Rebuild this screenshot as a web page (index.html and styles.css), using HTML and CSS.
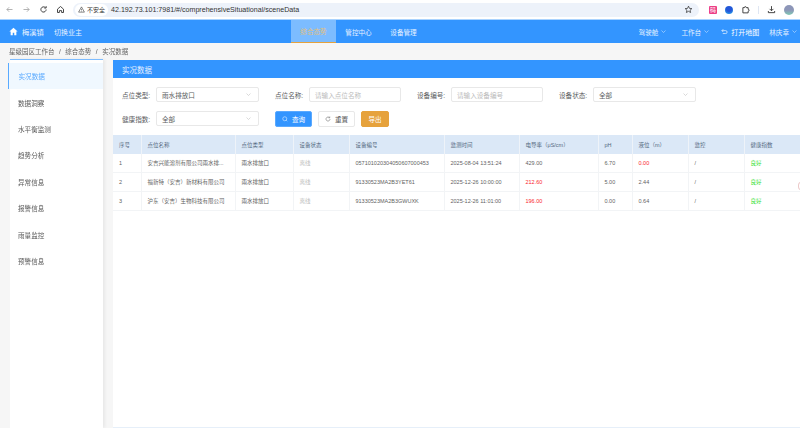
FILE: index.html
```html
<!DOCTYPE html>
<html lang="zh-CN">
<head>
    <meta charset="UTF-8">
    <title>实况数据</title>
    <link rel="stylesheet" href="styles.css">
</head>
<body>
    <div class="toolbar">
        <div class="tool-btns">
            <svg class="tool-icon faded" viewBox="0 0 12 12"><path d="M10 6H2.500M5.500 3L2.500 6l3 3"/></svg>
            <svg class="tool-icon faded" viewBox="0 0 12 12"><path d="M2 6h7.500M6.500 3l3 3-3 3"/></svg>
            <svg class="tool-icon" viewBox="0 0 12 12"><path d="M9.500 6A3.500 3.500 0 1 1 8.500 3.500M9.500 1.500v2.500H7"/></svg>
            <svg class="tool-icon" viewBox="0 0 12 12"><path d="M2 5.500L6 2l4 3.500v4.500H7.500V7.500h-3V10H2z"/></svg>
        </div>
        <div class="address">
            <span class="secure">
                <svg class="warn" viewBox="0 0 12 12"><path d="M6 1.500L11 10.500H1z"/><path d="M6 5v2.500M6 8.500v.8"/></svg>
                不安全
            </span>
            <span class="url">42.192.73.101:7981/#/comprehensiveSituational/sceneData</span>
            <svg class="star" viewBox="0 0 12 12"><path d="M6 1.500l1.300 3 3.200.3-2.400 2.100.7 3.100L6 8.400 3.200 10l.7-3.100L1.500 4.800l3.200-.3z"/></svg>
        </div>
        <div class="ext-btns">
            <span class="ext-pink">码</span>
            <span class="ext-blue"></span>
            <svg class="tool-icon" viewBox="0 0 12 12"><path d="M2.500 3.500h2a1.300 1.300 0 0 1 2.600 0h2.400v2.200a1.300 1.300 0 0 1 0 2.600v2.200h-7z"/></svg>
            <span class="tool-sep"></span>
            <svg class="tool-icon" viewBox="0 0 12 12"><path d="M6 1.500v6M3.500 5.200L6 7.700l2.500-2.500M1.800 8v2.200h8.400V8"/></svg>
            <span class="avatar"></span>
        </div>
    </div>

    <header class="topbar">
        <div class="brand">
            <svg class="home" viewBox="0 0 12 12"><path d="M6 1L.5 6h1.700v5h2.800V7.500h2V11h2.800V6h1.700z"/></svg>
            <span class="town">梅溪镇</span>
            <span class="switch">切换业主</span>
        </div>
        <nav class="nav">
            <a class="nav-item active">综合态势</a>
            <a class="nav-item">管控中心</a>
            <a class="nav-item">设备管理</a>
        </nav>
        <div class="top-right">
            <span class="menu menu-a">驾驶舱 <svg class="chev" viewBox="0 0 10 6"><path d="M1 1l4 4 4-4"/></svg></span>
            <span class="menu menu-b">工作台 <svg class="chev" viewBox="0 0 10 6"><path d="M1 1l4 4 4-4"/></svg></span>
            <span class="map-link">
                <svg class="back" viewBox="0 0 12 12"><path d="M4 2L1.500 4.500 4 7M1.500 4.500H8a2.500 2.500 0 0 1 0 5H3"/></svg>
                打开地图
            </span>
            <span class="menu">林庆幸 <svg class="chev" viewBox="0 0 10 6"><path d="M1 1l4 4 4-4"/></svg></span>
        </div>
    </header>

    <div class="crumbs">
        <span>星级园区工作台</span><i>/</i><span>综合态势</span><i>/</i><span>实况数据</span>
    </div>

    <div class="layout">
        <aside class="sidebar">
            <a class="side-item active">实况数据</a>
            <a class="side-item">数据洞察</a>
            <a class="side-item">水平衡监测</a>
            <a class="side-item">趋势分析</a>
            <a class="side-item">异常信息</a>
            <a class="side-item">报警信息</a>
            <a class="side-item">雨量监控</a>
            <a class="side-item">预警信息</a>
        </aside>

        <main class="panel">
            <div class="panel-title">实况数据</div>

            <div class="filters">
                <div class="field">
                    <label>点位类型:</label>
                    <div class="select">雨水排放口<svg class="chev" viewBox="0 0 10 6"><path d="M1 1l4 4 4-4"/></svg></div>
                </div>
                <div class="field">
                    <label>点位名称:</label>
                    <div class="input">请输入点位名称</div>
                </div>
                <div class="field">
                    <label>设备编号:</label>
                    <div class="input">请输入设备编号</div>
                </div>
                <div class="field">
                    <label>设备状态:</label>
                    <div class="select">全部<svg class="chev" viewBox="0 0 10 6"><path d="M1 1l4 4 4-4"/></svg></div>
                </div>
                <div class="field">
                    <label>健康指数:</label>
                    <div class="select">全部<svg class="chev" viewBox="0 0 10 6"><path d="M1 1l4 4 4-4"/></svg></div>
                </div>
                <div class="actions">
                    <button class="btn primary"><svg class="btn-icon" viewBox="0 0 12 12"><circle cx="5.500" cy="5.500" r="4"/><path d="M8.500 8.500l2 2"/></svg>查询</button>
                    <button class="btn"><svg class="btn-icon" viewBox="0 0 12 12"><path d="M10 6a4 4 0 1 1-1.200-2.800M9.500 1v2.500H7"/></svg>重置</button>
                    <button class="btn warning">导出</button>
                </div>
            </div>

            <table class="grid">
                <thead>
                    <tr>
                        <th>序号</th><th>点位名称</th><th>点位类型</th><th>设备状态</th><th>设备编号</th><th>监测时间</th><th>电导率（μS/cm）</th><th>pH</th><th>液位（m）</th><th>监控</th><th>健康指数</th>
                    </tr>
                </thead>
                <tbody>
                    <tr>
                        <td>1</td><td>安吉兴能溶剂有限公司雨水排...</td><td>雨水排放口</td><td class="off">离线</td><td>057101020304050607000453</td><td>2025-08-04 13:51:24</td><td>429.00</td><td>6.70</td><td class="bad">0.00</td><td>/</td><td class="good">良好</td>
                    </tr>
                    <tr>
                        <td>2</td><td>福新特（安吉）新材料有限公司</td><td>雨水排放口</td><td class="off">离线</td><td>91330523MA2B3YET61</td><td>2025-12-26 10:00:00</td><td class="bad">212.60</td><td>5.00</td><td>2.44</td><td>/</td><td class="good">良好</td>
                    </tr>
                    <tr>
                        <td>3</td><td>沪东（安吉）生物科技有限公司</td><td>雨水排放口</td><td class="off">离线</td><td>91330523MA2B3GWUXK</td><td>2025-12-26 11:01:00</td><td class="bad">196.00</td><td>0.00</td><td>0.64</td><td>/</td><td class="good">良好</td>
                    </tr>
                </tbody>
            </table>
            <span class="edge-nub"></span>
        </main>
    </div>
</body>
</html>
```

FILE: styles.css
```css
* {
    box-sizing: border-box;
}
html, body {
    margin: 0;
    height: 100%;
    overflow: hidden;
}
body {
    display: flex;
    flex-direction: column;
    font-family: "Liberation Sans", "Noto Sans CJK SC", sans-serif;
    font-size: 6.6px;
    color: #5a5c60;
    background-color: #f6f6f6;
    filter: blur(0.25px);
}
svg {
    fill: none;
    stroke: currentColor;
}

/* browser bar */
.toolbar {
    height: 20px;
    flex: none;
    display: flex;
    align-items: center;
    background-color: #fff;
    border-bottom: 1px solid #a9d3ff;
}
.tool-btns {
    width: 73px;
    display: flex;
    gap: 8px;
    padding-left: 5px;
    flex: none;
}
.tool-icon {
    width: 9px;
    height: 9px;
    color: #333;
    stroke-width: 1.2;
    flex: none;
}
.tool-icon.faded {
    color: #aaa;
}
.address {
    width: 626px;
    height: 14px;
    flex: none;
    display: flex;
    align-items: center;
    background-color: #edf2fa;
    border-radius: 7px;
    padding: 0 6px 0 2px;
}
.secure {
    display: flex;
    align-items: center;
    gap: 2px;
    height: 12px;
    padding: 0 3px;
    background-color: #fff;
    border-radius: 6px;
    font-size: 6px;
    color: #333;
}
.warn {
    width: 7px;
    height: 7px;
    color: #333;
}
.url {
    margin-left: 3px;
    font-size: 7.1px;
    color: #333;
    flex: 1;
}
.star {
    width: 9px;
    height: 9px;
    color: #333;
}
.ext-btns {
    display: flex;
    align-items: center;
    flex: none;
    gap: 8px;
    padding-left: 10px;
}
.ext-pink {
    width: 8px;
    height: 8px;
    border-radius: 1px;
    background-color: #ec3f86;
    color: #fff;
    font-size: 6px;
    line-height: 8px;
    text-align: center;
}
.ext-blue {
    width: 8px;
    height: 8px;
    border-radius: 50%;
    background: radial-gradient(circle at 50% 35%, #2456d8 40%, #2bb8ee);
}
.tool-sep {
    width: 1px;
    height: 8px;
    background-color: #dfe6f2;
}
.avatar {
    width: 10px;
    height: 10px;
    border-radius: 50%;
    background: linear-gradient(#8d96b8 50%, #7fc9b4);
}

/* app header */
.topbar {
    height: 23px;
    flex: none;
    display: flex;
    align-items: stretch;
    background-color: #3395ff;
    color: #e6f1ff;
}
.brand {
    width: 291px;
    display: flex;
    align-items: center;
    padding-left: 9px;
}
.home {
    width: 9px;
    height: 9px;
    fill: #fff;
    stroke: none;
}
.town {
    margin-left: 4px;
    font-size: 7.3px;
}
.switch {
    margin-left: 10px;
    font-size: 7px;
}
.nav {
    display: flex;
}
.nav-item {
    width: 45px;
    display: flex;
    align-items: center;
    justify-content: center;
}
.nav-item.active {
    background-color: #7cbcff;
    color: #e0c080;
    border-bottom: 1px solid #e6a23c;
}
.top-right {
    margin-left: auto;
    display: flex;
    align-items: center;
    padding-right: 3px;
}
.menu {
    display: flex;
    align-items: center;
    gap: 3px;
}
.menu-a {
    margin-right: 15px;
}
.menu-b {
    margin-right: 12px;
}
.chev {
    width: 5px;
    height: 3px;
    stroke-width: 1;
}
.map-link {
    display: flex;
    align-items: center;
    gap: 3px;
    margin-right: 10px;
    font-size: 7px;
    color: #fff;
}
.back {
    width: 7px;
    height: 7px;
    stroke-width: 1.1;
}

/* breadcrumb */
.crumbs {
    height: 16px;
    flex: none;
    display: flex;
    align-items: center;
    padding-left: 9px;
    color: #666;
    font-size: 6.5px;
}
.crumbs i {
    font-style: normal;
    margin: 0 4.5px;
}

.layout {
    flex: 1;
    min-height: 0;
    display: flex;
    gap: 10px;
    padding-left: 10px;
}
.sidebar {
    width: 93px;
    flex: none;
    background-color: #fff;
    border-top: 1px solid #7dbcff;
    box-shadow: 2px 0 3px rgba(0, 0, 0, 0.06);
    padding-top: 3px;
}
.side-item {
    display: flex;
    align-items: center;
    height: 26.4px;
    padding-left: 8px;
    color: #5a5a5a;
}
.side-item.active {
    margin-left: -2px;
    padding-left: 9.5px;
    color: #5aaaff;
    background-color: #f0f8ff;
    border-left: 1.5px solid #5aaaff;
}

.panel {
    flex: 1;
    min-width: 0;
    position: relative;
    margin-top: 1px;
    background-color: #fff;
    border-bottom: 1px solid #e6eff9;
}
.panel-title {
    height: 18px;
    display: flex;
    align-items: center;
    padding-left: 9px;
    font-size: 7.5px;
    color: #e6f1ff;
    background-color: #3395ff;
}
.filters {
    height: 57px;
    display: flex;
    flex-wrap: wrap;
    align-content: flex-start;
    gap: 9px 16px;
    padding: 9px 0 0 9px;
}
.field {
    display: flex;
    align-items: center;
    gap: 6px;
}
.field label {
    width: 28px;
    white-space: nowrap;
}
.select, .input {
    height: 15px;
    display: flex;
    align-items: center;
    justify-content: space-between;
    padding: 0 5px;
    border: 1px solid #e8e8e8;
    border-radius: 2px;
}
.select {
    width: 103px;
}
.select .chev {
    color: #b5b5b5;
    margin-right: 2px;
}
.input {
    width: 92px;
    color: #bbb;
}
.actions {
    display: flex;
    gap: 6px;
}
.btn {
    width: 37px;
    height: 15.5px;
    display: flex;
    align-items: center;
    justify-content: center;
    gap: 4px;
    padding: 0;
    font: inherit;
    color: #555;
    background-color: #fff;
    border: 1px solid #e8e8e8;
    border-radius: 2px;
}
.btn.primary {
    color: #fff;
    background-color: #3395ff;
    border-color: #5aa9ff;
}
.btn.warning {
    width: 28px;
    color: #fff;
    background-color: #e6a23c;
    border-color: #e6a23c;
}
.btn-icon {
    width: 6px;
    height: 6px;
    stroke-width: 1;
}

.grid {
    width: 687px;
    table-layout: fixed;
    border-collapse: collapse;
    font-size: 5.5px;
}
.grid th:nth-child(1) { width: 28px; }
.grid th:nth-child(2) { width: 94px; }
.grid th:nth-child(3) { width: 58px; }
.grid th:nth-child(4) { width: 56px; }
.grid th:nth-child(5) { width: 95px; }
.grid th:nth-child(6) { width: 75px; }
.grid th:nth-child(7) { width: 79px; }
.grid th:nth-child(8) { width: 34px; }
.grid th:nth-child(9) { width: 56px; }
.grid th:nth-child(10) { width: 56px; }
.grid th:nth-child(11) { width: 56px; }
.grid th {
    height: 19px;
    padding: 0 0 0 6px;
    font-weight: normal;
    text-align: left;
    color: #54697f;
    background-color: #dbe8f7;
    border-right: 1px solid #eef3f9;
}
.grid td {
    height: 18.8px;
    padding: 0 0 0 6px;
    white-space: nowrap;
    overflow: hidden;
    color: #5f5f5f;
    border-right: 1px solid #f2f4f6;
    border-bottom: 1px solid #f2f4f6;
}
.grid td.off {
    color: #bbb;
}
.grid td.bad {
    color: #fa1e2d;
}
.grid td.good {
    color: #33e033;
}
.edge-nub {
    position: absolute;
    right: -3px;
    top: 122px;
    width: 5px;
    height: 8px;
    border-radius: 50%;
    background-color: #fff;
    border: 1px solid #ecc8c8;
}
```
